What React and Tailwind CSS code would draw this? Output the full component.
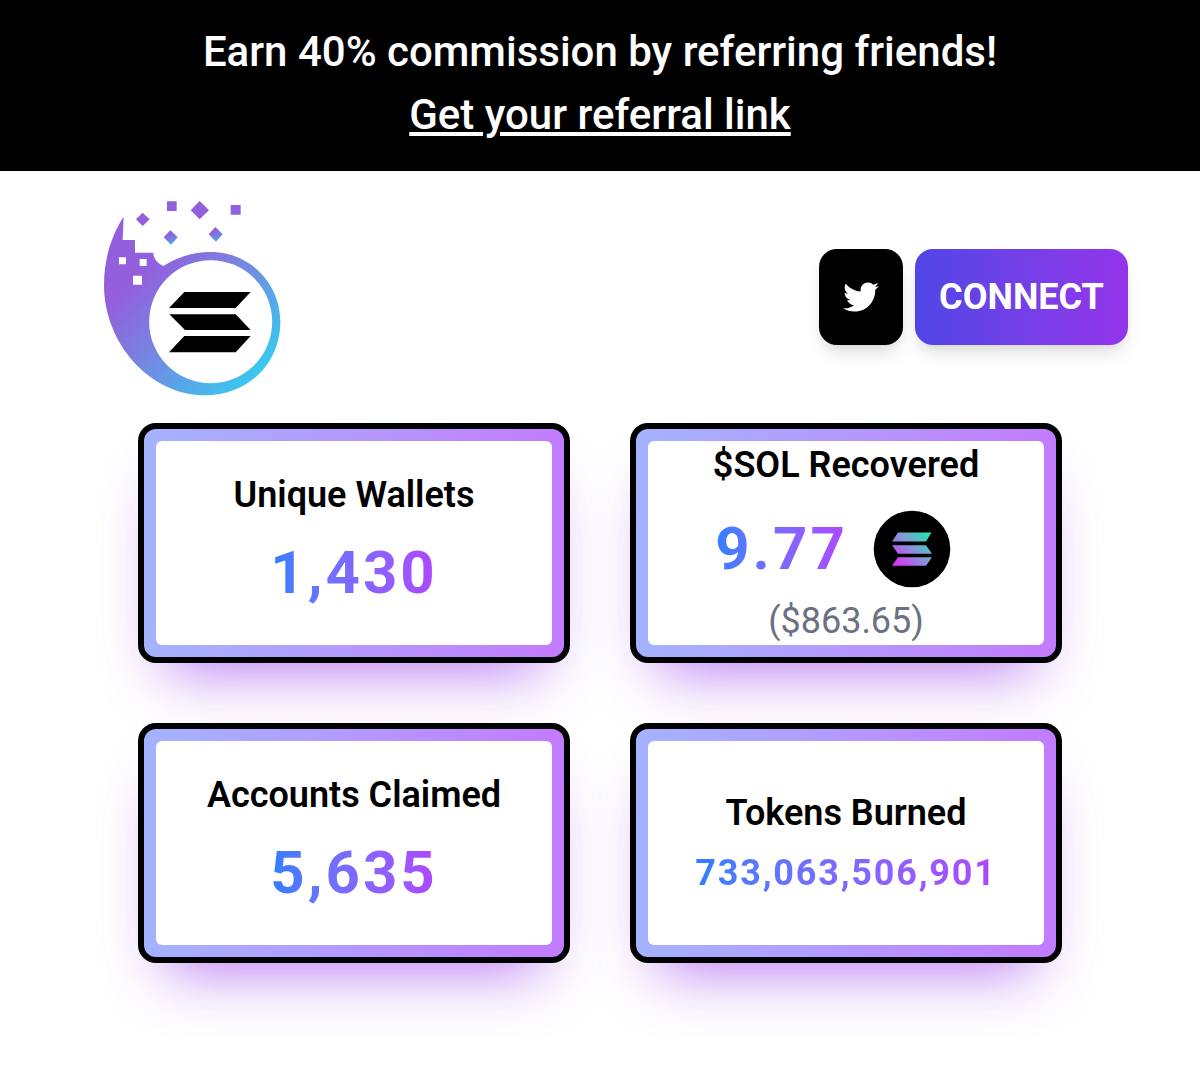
import { RiTwitterFill } from "react-icons/ri";

function Logo() {
  return (
    <svg className="h-[214px] w-[200px]" viewBox="0 0 600 642">
      <defs>
        <linearGradient id="comet" gradientUnits="userSpaceOnUse" x1="200" y1="200" x2="530" y2="530">
          <stop offset="0" stopColor="#935fdc" />
          <stop offset="0.4" stopColor="#7884e1" />
          <stop offset="1" stopColor="#38c8ef" />
        </linearGradient>
        <linearGradient id="spark" x1="0.35" y1="0" x2="0.65" y2="1">
          <stop offset="0.3" stopColor="#935fdc" />
          <stop offset="0.8" stopColor="#5c96e8" />
        </linearGradient>
      </defs>
      <path
        fill="url(#comet)"
        d="M101 80L98 150H135V188H190C190 208 205 220 220 228C265 200 315 184 370 186C485 190 571 285 571 395C571 520 475 616 345 616C180 616 42 460 42 285C42 205 65 135 101 80Z"
      />
      <circle cx="362" cy="395" r="184.500" fill="#fff" />
      <g fill="#fff">
        <path d="M87 202h21v21h-21zM149 207h21v21h-21zM129 257h27v27h-27z" />
      </g>
      <g fill="#935fdc">
        <path d="M231 34h29v29h-29zM422 45h30v29h-30zM158 68l21 20-21 20-20-20zM329 33l28 28-28 27-27-27z" />
      </g>
      <path fill="url(#spark)" d="M241 121l22 21-20 22-22-22z" />
      <path fill="url(#spark)" d="M376 111l22 22-20 22-22-22z" />
      <path d="M283 306H482L437 354H237ZM238 373H437L482 420H285ZM283 438H482L437 487H237Z" />
    </svg>
  );
}

function SolIcon() {
  return (
    <svg className="size-[78px]" viewBox="0 0 78 78">
      <defs>
        <linearGradient id="sol" gradientUnits="userSpaceOnUse" x1="23" y1="55" x2="55" y2="23">
          <stop offset="0.05" stopColor="#d33bf5" />
          <stop offset="0.5" stopColor="#8a92d8" />
          <stop offset="1" stopColor="#22e6b0" />
        </linearGradient>
      </defs>
      <circle cx="39" cy="39" r="38.300" />
      <path
        fill="url(#sol)"
        d="M25 22.500H58.500L53 31.500H19ZM19 35.300H53L59 43.700H25ZM25 47.300H59L53 55.800H19Z"
      />
    </svg>
  );
}

function Card({ title, children }) {
  return (
    <div className="h-60 rounded-[18px] border-6 border-black bg-linear-to-r from-indigo-300 to-purple-400 p-3 shadow-[0_36px_60px_-30px_rgba(160,70,235,0.72),0_36px_75px_-15px_rgba(160,70,235,0.05)]">
      <div className="flex h-full flex-col items-center justify-center rounded-md bg-white">
        <h3 className="shrink-0 text-4xl leading-[54px] font-semibold">{title}</h3>
        {children}
      </div>
    </div>
  );
}

function Value({ children }) {
  return (
    <p className="bg-linear-to-r from-blue-500 to-purple-500 bg-clip-text text-6xl leading-[90px] font-bold tracking-[3px] text-transparent">
      {children}
    </p>
  );
}

export default function App() {
  return (
    <div className="min-h-[1067px] bg-white font-['Roboto',sans-serif] text-black">
      <div className="h-[171px] bg-black pt-5 text-center text-[42px] leading-[63px] font-medium text-white">
        <p>Earn 40% commission by referring friends!</p>
        <a href="#" className="underline decoration-4 underline-offset-[3px]">Get your referral link</a>
      </div>

      <header className="flex h-[252px] items-center justify-between pr-[72px] pl-[90px]">
        <Logo />
        <div className="flex gap-3">
          <a href="#" className="flex h-24 w-21 items-center justify-center rounded-[18px] bg-black text-white shadow-[0_12px_18px_-3px_rgba(0,0,0,0.1),0_6px_12px_-6px_rgba(0,0,0,0.1)]">
            <RiTwitterFill size={42} />
          </a>
          <button className="h-24 w-[213px] rounded-[18px] bg-linear-to-r from-[#4f46e5] to-[#9333ea] text-4xl font-bold text-white shadow-[0_12px_18px_-3px_rgba(0,0,0,0.1),0_6px_12px_-6px_rgba(0,0,0,0.1)]">
            CONNECT
          </button>
        </div>
      </header>

      <main className="grid grid-cols-2 gap-15 px-[138px]">
        <Card title="Unique Wallets">
          <div className="mt-1.5">
            <Value>1,430</Value>
          </div>
        </Card>
        <Card title="$SOL Recovered">
          <div className="mt-3 mr-[26px] flex shrink-0 items-center gap-[25px]">
            <Value>9.77</Value>
            <SolIcon />
          </div>
          <p className="shrink-0 text-4xl leading-[54px] text-gray-500">($863.65)</p>
        </Card>
        <Card title="Accounts Claimed">
          <div className="mt-1.5">
            <Value>5,635</Value>
          </div>
        </Card>
        <Card title="Tokens Burned">
          <p className="mt-1.5 bg-linear-to-r from-blue-500 to-purple-500 bg-clip-text text-4xl leading-[54px] font-bold tracking-[1.8px] text-transparent">
            733,063,506,901
          </p>
        </Card>
      </main>
    </div>
  );
}
